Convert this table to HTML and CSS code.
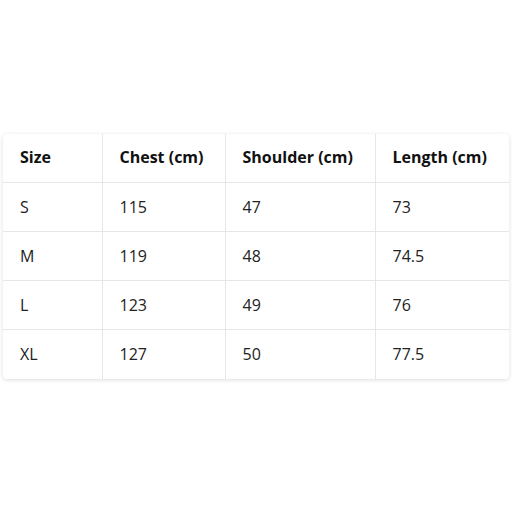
FILE: index.html
```html
<!DOCTYPE html>
<html>
<head>
<meta charset="utf-8">
<link rel="stylesheet" href="styles.css">
</head>
<body>
<div class="page">
  <div class="card">
    <table class="sizes">
      <colgroup>
        <col class="c1"><col class="c2"><col class="c3"><col class="c4">
      </colgroup>
      <thead>
        <tr><th>Size</th><th>Chest (cm)</th><th>Shoulder (cm)</th><th>Length (cm)</th></tr>
      </thead>
      <tbody>
        <tr><td>S</td><td>115</td><td>47</td><td>73</td></tr>
        <tr><td>M</td><td>119</td><td>48</td><td>74.5</td></tr>
        <tr><td>L</td><td>123</td><td>49</td><td>76</td></tr>
        <tr><td>XL</td><td>127</td><td>50</td><td>77.5</td></tr>
      </tbody>
    </table>
  </div>
</div>
</body>
</html>
```
FILE: styles.css
```css
html, body { margin: 0; padding: 0; background: #fff; }
.page {
  width: 513px;
  height: 513px;
  display: flex;
  align-items: center;
  justify-content: center;
}
.card {
  width: 506px;
  margin-left: -1px;
  margin-top: -1px;
  border-radius: 4px;
  background: #fff;
  box-shadow: 0 1px 4px rgba(0,0,0,0.14);
  overflow: hidden;
}
.sizes {
  width: 506px;
  border-collapse: collapse;
  table-layout: fixed;
  font-family: "Open Sans", "Noto Sans", sans-serif;
  font-size: 16px;
  line-height: 22px;
  color: #222;
}
.c1 { width: 99px; }
.c2 { width: 123px; }
.c3 { width: 150px; }
.c4 { width: 134px; }
.sizes th, .sizes td {
  height: 49px;
  box-sizing: border-box;
  padding: 0 0 1px 17px;
  text-align: left;
  border-right: 1px solid #e6e6e6;
  border-bottom: 1px solid #e6e6e6;
  white-space: nowrap;
}
.sizes th:last-child, .sizes td:last-child { border-right: none; }
.sizes tbody tr:last-child td { border-bottom: none; }
.sizes th { font-weight: 700; color: #111; }
```
